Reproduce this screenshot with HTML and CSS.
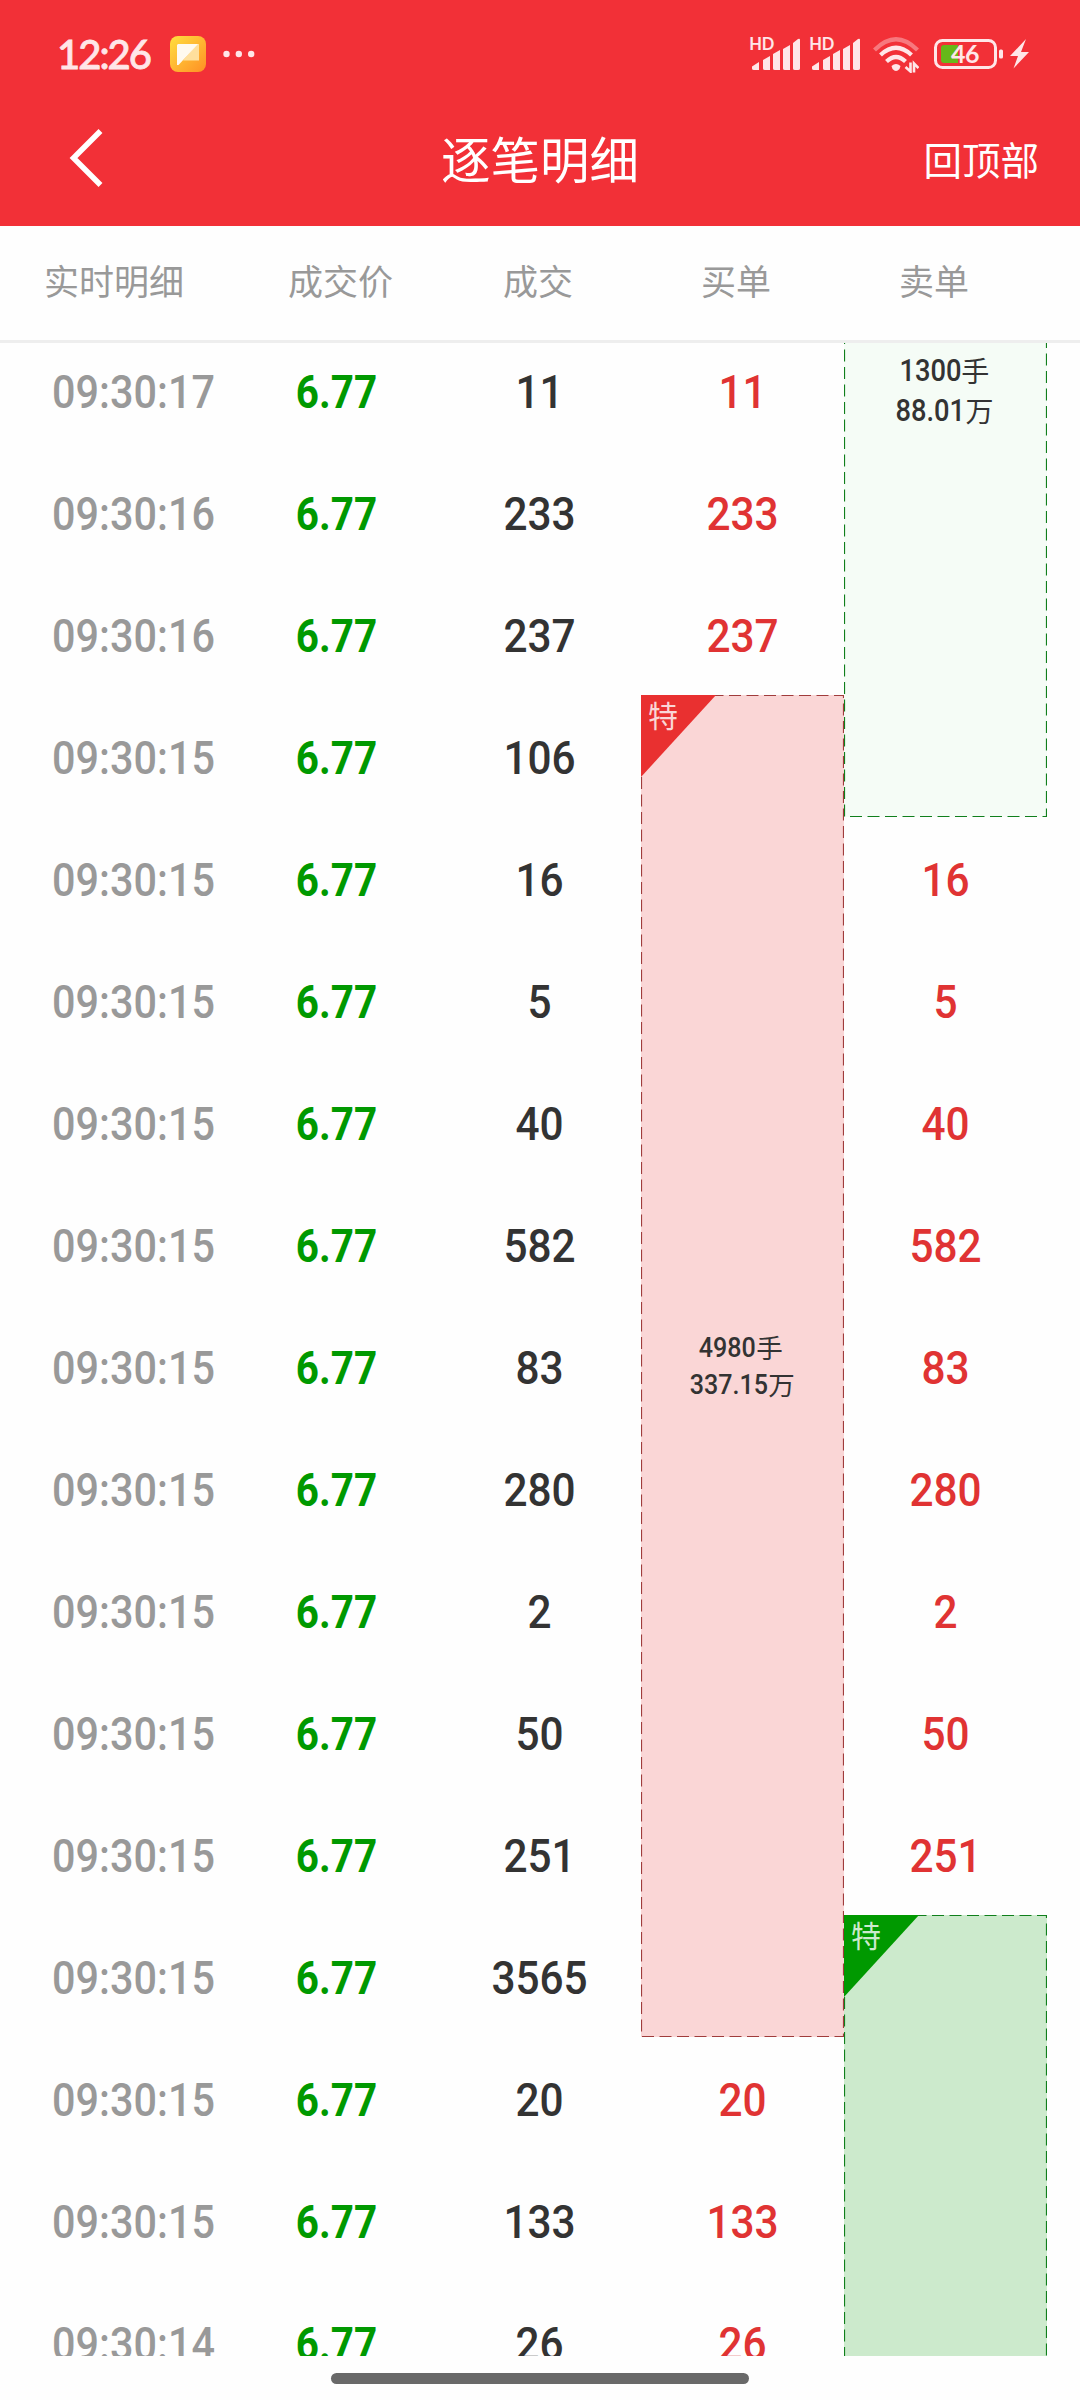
FILE: index.html
```html
<!DOCTYPE html>
<html lang="zh-CN">
<head>
    <meta charset="UTF-8">
    <meta name="viewport" content="width=device-width, initial-scale=1.0">
    <title>逐笔明细</title>
    <link rel="stylesheet" href="styles.css">
</head>
<body>
    <header class="header">
        <div class="status-bar">
            <span class="clock">12:26</span>
            <svg class="app-icon" width="36" height="36" viewBox="0 0 36 36">
                <defs>
                    <linearGradient id="appBg" x1="0" y1="0" x2="1" y2="1">
                        <stop offset="0" stop-color="#ffdf40"/>
                        <stop offset="1" stop-color="#ff8f24"/>
                    </linearGradient>
                </defs>
                <rect width="36" height="36" rx="8" fill="url(#appBg)"/>
                <path d="M27 8h2v16.500h-16z" fill="#ffdf9c"/>
                <path d="M8 8h20L8.500 29H7V9z" fill="#fffaf0"/>
            </svg>
            <svg class="dots" width="32" height="8" viewBox="0 0 32 8">
                <circle cx="3.500" cy="4" r="3.200"/>
                <circle cx="15.800" cy="4" r="3.200"/>
                <circle cx="28.200" cy="4" r="3.200"/>
            </svg>
            <div class="status-icons">
                <svg class="signal" width="50" height="34" viewBox="0 0 50 34">
                    <text x="-0.800" y="13" textLength="25">HD</text>
                    <path d="M2 29.500l7-4.500v8H4q-2 0-2-1.500zM13 23l7-4v14h-5q-2 0-2-1.500zM23 17l7-4v20h-5q-2 0-2-1.500zM33 12l7-4v25h-5q-2 0-2-1.500zM43 6l5-4q2-1 2 1v28.500q0 1.500-2 1.500h-3q-2 0-2-1.500z"/>
                </svg>
                <svg class="signal" width="50" height="34" viewBox="0 0 50 34">
                    <text x="-0.800" y="13" textLength="25">HD</text>
                    <path d="M2 29.500l7-4.500v8H4q-2 0-2-1.500zM13 23l7-4v14h-5q-2 0-2-1.500zM23 17l7-4v20h-5q-2 0-2-1.500zM33 12l7-4v25h-5q-2 0-2-1.500zM43 6l5-4q2-1 2 1v28.500q0 1.500-2 1.500h-3q-2 0-2-1.500z"/>
                </svg>
                <svg class="wifi" width="46" height="36" viewBox="0 0 46 36">
                    <g fill="none" stroke-width="4.200">
                        <path d="M1.500 13Q23-8.500 44.500 13" opacity=".4"/>
                        <path d="M7.500 18Q23 3.500 38.500 18"/>
                        <path d="M13.500 24.500Q23 15.500 32.500 24.500"/>
                    </g>
                    <path d="M18.500 29q4.500-4 9 0l-1 3q-3.500 4-7 0z" class="fill"/>
                    <path d="M37.500 25.500v9l-5-4.500M41 35.500v-9l4.500 4.500" fill="none" stroke-width="2.600"/>
                </svg>
                <svg class="battery" width="70" height="32" viewBox="0 0 70 32">
                    <rect x="1.500" y="2.500" width="60" height="27" rx="7" fill="none" stroke-width="3"/>
                    <path d="M10 7h14v18H10q-3 0-3-3V10q0-3 3-3z" fill="#66b819"/>
                    <rect x="65" y="11.500" width="4" height="9" rx="1.500" class="fill"/>
                    <text x="31" y="25" text-anchor="middle">46</text>
                </svg>
                <svg class="bolt" width="20" height="30" viewBox="0 0 20 30">
                    <path d="M16 0L0 17h8L3.500 29.500 19 13h-8z"/>
                </svg>
            </div>
        </div>
        <nav class="nav-bar">
            <svg class="back" width="36" height="60" viewBox="0 0 36 60">
                <path d="M31.500 3L4.500 30l27 27"/>
            </svg>
            <h1>逐笔明细</h1>
            <a class="to-top">回顶部</a>
        </nav>
    </header>

    <div class="columns">
        <span>实时明细</span>
        <span>成交价</span>
        <span>成交</span>
        <span>买单</span>
        <span>卖单</span>
    </div>

    <main class="list">
        <div class="grid">
            <!-- merged orders -->
            <div class="order sell sell-small">
                <svg class="outline"><rect x="0.500" y="0.500" width="202" height="487" stroke-dashoffset="1.500"/></svg>
                <p><span class="qty">1300</span>手</p>
                <p><span class="qty">88.01</span>万</p>
            </div>
            <div class="order buy">
                <svg class="outline"><rect x="0.500" y="0.500" width="202" height="1341"/></svg>
                <div class="corner"><span>特</span></div>
                <p><span class="qty">4980</span>手</p>
                <p><span class="qty">337.15</span>万</p>
            </div>
            <div class="order sell sell-big">
                <svg class="outline"><rect x="0.500" y="0.500" width="202" height="1341"/></svg>
                <div class="corner"><span>特</span></div>
            </div>

            <span class="time">09:30:17</span><span class="price">6.77</span><span class="vol">11</span><span class="num">11</span>
            <span class="time">09:30:16</span><span class="price">6.77</span><span class="vol">233</span><span class="num">233</span>
            <span class="time">09:30:16</span><span class="price">6.77</span><span class="vol">237</span><span class="num">237</span>
            <span class="time">09:30:15</span><span class="price">6.77</span><span class="vol">106</span>
            <span class="time">09:30:15</span><span class="price">6.77</span><span class="vol">16</span><span class="num">16</span>
            <span class="time">09:30:15</span><span class="price">6.77</span><span class="vol">5</span><span class="num">5</span>
            <span class="time">09:30:15</span><span class="price">6.77</span><span class="vol">40</span><span class="num">40</span>
            <span class="time">09:30:15</span><span class="price">6.77</span><span class="vol">582</span><span class="num">582</span>
            <span class="time">09:30:15</span><span class="price">6.77</span><span class="vol">83</span><span class="num">83</span>
            <span class="time">09:30:15</span><span class="price">6.77</span><span class="vol">280</span><span class="num">280</span>
            <span class="time">09:30:15</span><span class="price">6.77</span><span class="vol">2</span><span class="num">2</span>
            <span class="time">09:30:15</span><span class="price">6.77</span><span class="vol">50</span><span class="num">50</span>
            <span class="time">09:30:15</span><span class="price">6.77</span><span class="vol">251</span><span class="num">251</span>
            <span class="time">09:30:15</span><span class="price">6.77</span><span class="vol">3565</span>
            <span class="time">09:30:15</span><span class="price">6.77</span><span class="vol">20</span><span class="num">20</span>
            <span class="time">09:30:15</span><span class="price">6.77</span><span class="vol">133</span><span class="num">133</span>
            <span class="time">09:30:14</span><span class="price">6.77</span><span class="vol">26</span><span class="num">26</span>
        </div>
    </main>

    <div class="home-bar"></div>
</body>
</html>
```

FILE: styles.css
```css
* { box-sizing: border-box; }
body {
    margin: 0;
    width: 1080px;
    height: 2400px;
    overflow: hidden;
    background-color: #fefefe;
    font-family: "Noto Sans CJK SC", sans-serif;
    color: #333;
}
h1, p { margin: 0; font-weight: 400; }
svg { display: block; }

/* header */
.header {
    height: 226px;
    background-color: #f23037;
    color: #fff;
}
.status-bar {
    display: flex;
    align-items: center;
    height: 108px;
    padding: 0 50px 0 57px;
}
.clock {
    width: 113px;
    font: 500 40px/48px Lato, sans-serif;
    letter-spacing: -2px;
    color: #ffe6e8;
    -webkit-text-stroke: 0.8px #ffe6e8;
}
.dots { margin-left: 17px; fill: #ffe6e8; }
.status-icons {
    display: flex;
    align-items: center;
    margin-left: auto;
    fill: #ffe6e8;
    stroke: none;
}
.signal { margin-right: 10px; overflow: visible; }
.signal text { font: 700 16.5px Lato, sans-serif; }
.wifi { margin: 2px 15px 0 3px; stroke: #ffe6e8; fill: none; }
.wifi .fill { fill: #ffe6e8; stroke: none; }
.battery { stroke: #ffe6e8; }
.battery .fill, .battery path { stroke: none; }
.battery .fill, .battery text { fill: #ffe6e8; }
.battery text { font: 700 25px Lato, sans-serif; letter-spacing: -0.5px; stroke: none; }
.bolt { margin-left: 6px; }

.nav-bar {
    display: grid;
    grid-template-columns: 200px 1fr 200px;
    align-items: center;
    height: 99px;
    padding: 0 41px 0 69px;
}
.back path {
    fill: none;
    stroke: #fff;
    stroke-width: 5.5;
}
.nav-bar h1 {
    padding-right: 28px;
    font-size: 49.5px;
    line-height: 60px;
    text-align: center;
}
.to-top {
    font-size: 38.5px;
    line-height: 50px;
    text-align: right;
}

/* column titles */
.columns {
    display: grid;
    grid-template-columns: 244px 215px 198px 198px 1fr;
    align-items: center;
    height: 117px;
    padding: 0 0 7px 44px;
    border-bottom: 3px solid #eee;
    font-size: 35px;
    line-height: 46px;
    color: #999;
}

/* trade list */
.list {
    height: 2013px;
    overflow: hidden;
}
.grid {
    display: grid;
    grid-template-columns: repeat(5, 203px);
    grid-template-rows: repeat(17, 122px);
    margin-top: -14px;
    padding-left: 32px;
}
.time, .price, .vol, .num {
    font: 500 47px/126px Roboto, sans-serif;
    text-align: center;
    transform: scaleX(0.9);
}
.time { color: #999; transform: scaleX(0.88); }
.price { font-weight: 700; color: #090; transform: scaleX(0.86); }
.num { color: #e03333; }

.order {
    display: flex;
    flex-direction: column;
    align-items: center;
    justify-content: center;
    position: relative;
    font-size: 26.5px;
    line-height: 36px;
}
.order p { display: flex; }
.qty {
    margin-left: -11px;
    font: 500 28.5px/37px Roboto, sans-serif;
    transform: scaleX(0.88);
    transform-origin: right;
}
.buy {
    grid-column: 4;
    grid-row: 4 / 15;
    background-color: #fad6d6;
}
.sell { grid-column: 5; }
.sell-small {
    grid-row: 1 / 5;
    justify-content: flex-start;
    padding-top: 22px;
    background-color: #f5fcf6;
    font-size: 28px;
    line-height: 39px;
}
.sell-small .qty { font-size: 31px; line-height: 40px; }
.sell-big {
    grid-row: 14 / 18;
    background-color: #cceacc;
}
.outline {
    position: absolute;
    top: 0;
    left: 0;
    width: 100%;
    height: 100%;
    fill: none;
    stroke: #107f1c;
    stroke-width: 1.2;
    stroke-dasharray: 12 5.5;
}
.buy .outline { stroke: #a03c3c; }
.corner {
    position: absolute;
    top: 0;
    left: 0;
    width: 75px;
    height: 82px;
    padding: 1px 0 0 7px;
    background-color: #090;
    clip-path: polygon(0 0, 100% 0, 0 100%);
    font-size: 30px;
    line-height: 36px;
    color: #cceacc;
}
.buy .corner { background-color: #e93030; color: #fad6d6; }

.home-bar {
    width: 418px;
    height: 11px;
    margin: 17px auto 0;
    border-radius: 6px;
    background-color: #696969;
}
```
